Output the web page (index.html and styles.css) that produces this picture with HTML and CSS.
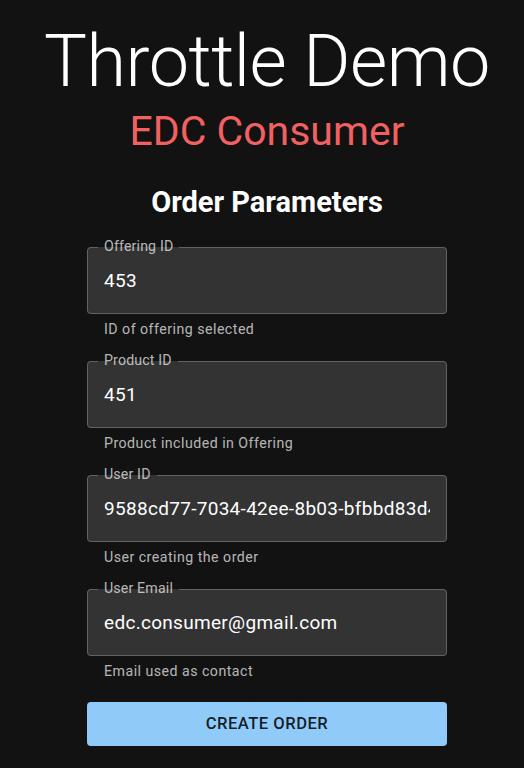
FILE: index.html
```html
<!DOCTYPE html>
<html lang="en">
<head>
<meta charset="utf-8">
<title>Throttle Demo</title>
<link rel="stylesheet" href="styles.css">
</head>
<body>
<main class="page">
  <h1 class="title">Throttle Demo</h1>
  <h2 class="subtitle">EDC Consumer</h2>
  <form class="form">
    <h3 class="form-title">Order Parameters</h3>
    <div class="group">
      <fieldset class="field">
        <legend class="label">Offering ID</legend>
        <input class="input" type="text" value="453">
      </fieldset>
      <p class="helper">ID of offering selected</p>
    </div>
    <div class="group">
      <fieldset class="field">
        <legend class="label">Product ID</legend>
        <input class="input" type="text" value="451">
      </fieldset>
      <p class="helper">Product included in Offering</p>
    </div>
    <div class="group">
      <fieldset class="field">
        <legend class="label">User ID</legend>
        <input class="input" type="text" value="9588cd77-7034-42ee-8b03-bfbbd83d4a1c">
      </fieldset>
      <p class="helper">User creating the order</p>
    </div>
    <div class="group">
      <fieldset class="field">
        <legend class="label">User Email</legend>
        <input class="input" type="text" value="edc.consumer@gmail.com">
      </fieldset>
      <p class="helper">Email used as contact</p>
    </div>
    <button class="button" type="button">Create Order</button>
  </form>
</main>
</body>
</html>
```
FILE: styles.css
```css
html, body {
  margin: 0;
  padding: 0;
  background: #121212;
  color: #fff;
  font-family: Roboto, "Noto Sans", sans-serif;
}
.page {
  display: flex;
  flex-direction: column;
  align-items: center;
  padding-left: 10px;
  padding-top: 18px;
}
.title {
  margin: 0;
  font-weight: 300;
  font-size: 72px;
  line-height: 87.5px;
  letter-spacing: -0.5px;
}
.subtitle {
  margin: 0;
  font-weight: 400;
  font-size: 41px;
  line-height: 50px;
  color: #f16161;
}
.form {
  width: 360px;
  display: flex;
  flex-direction: column;
  margin-top: 29px;
}
.form-title {
  margin: 0 0 21px;
  text-align: center;
  font-weight: 700;
  font-size: 29px;
  line-height: 34px;
}
.group {
  margin-bottom: 15px;
}
.field {
  margin: 0;
  padding: 0 16px;
  border: 1px solid rgba(255, 255, 255, 0.23);
  border-radius: 4px;
  background: #333333;
  height: 74px;
  box-sizing: border-box;
  display: flex;
  align-items: center;
}
.label {
  margin-left: -6px;
  padding: 0 6px 4px;
  font-size: 14.2px;
  line-height: 12px;
  color: rgba(255, 255, 255, 0.7);
  letter-spacing: 0.15px;
}
.input {
  width: 100%;
  border: 0;
  padding: 0;
  margin: 0 0 8px;
  background: transparent;
  color: #fff;
  font-family: Roboto, "Noto Sans", sans-serif;
  font-size: 19px;
  line-height: 23px;
  letter-spacing: 0.3px;
  outline: none;
}
.helper {
  margin: 5px 0 0;
  padding-left: 17px;
  font-size: 14.2px;
  line-height: 20px;
  color: rgba(255, 255, 255, 0.7);
  letter-spacing: 0.47px;
}
.button {
  margin-top: 6px;
  height: 44px;
  border: 0;
  border-radius: 4px;
  background: #90caf9;
  color: rgba(0, 0, 0, 0.87);
  font-family: Roboto, "Noto Sans", sans-serif;
  font-weight: 500;
  font-size: 16.6px;
  letter-spacing: 0.48px;
  text-transform: uppercase;
}
```
